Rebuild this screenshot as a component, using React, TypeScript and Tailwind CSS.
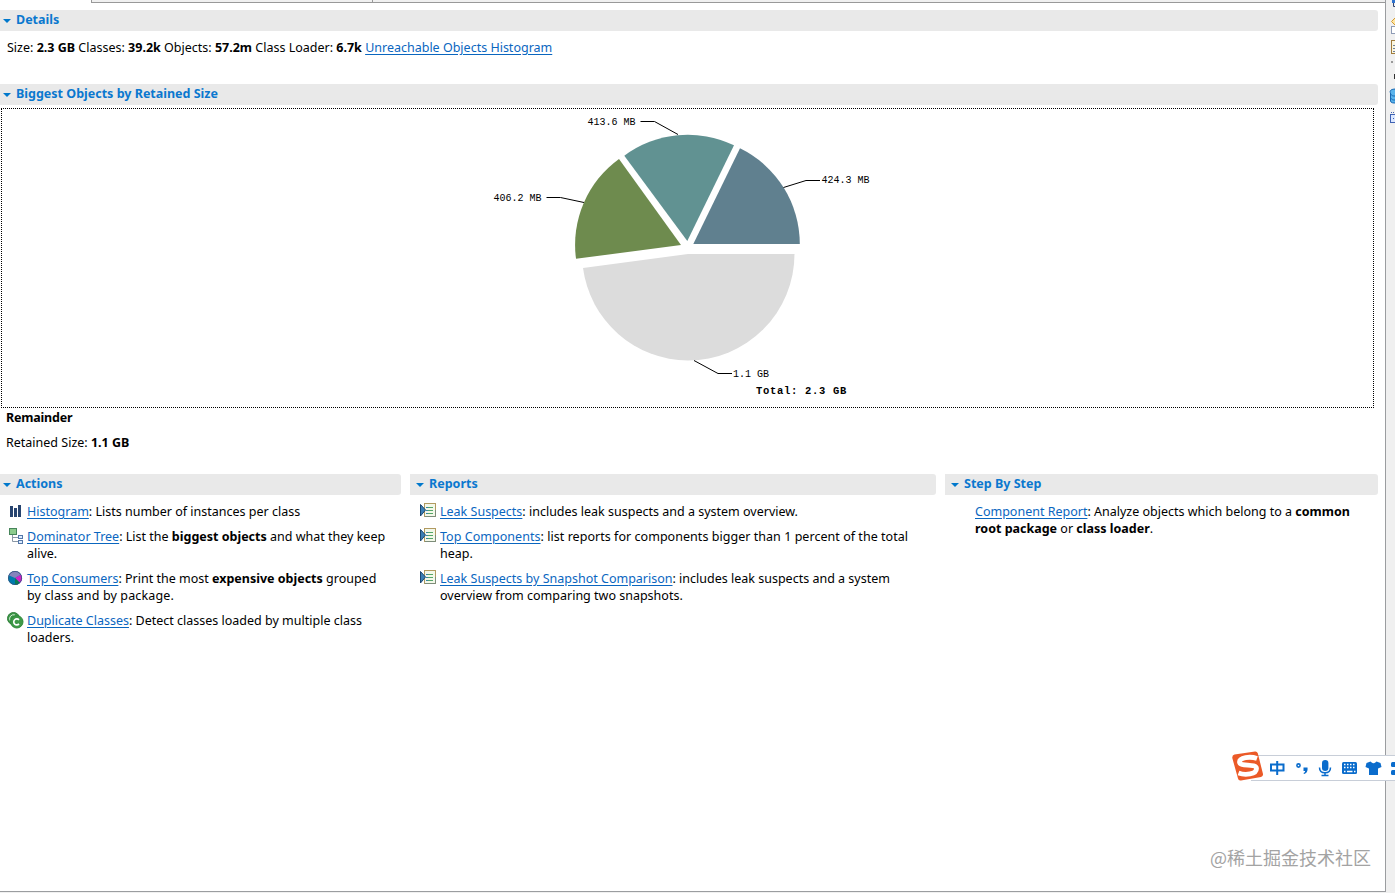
import type { ReactNode } from 'react';

function SectionHeader({ title, inset = false }: { title: string; inset?: boolean }) {
  return (
    <div className={`flex h-[21px] items-center rounded-r-[3px] bg-[#e9e9e9] ${inset ? 'pl-1.5' : 'pl-[3px]'}`}>
      <svg className="mt-px shrink-0" width="8" height="4" viewBox="0 0 8 4">
        <path d="M0 0H8L4 4Z" fill="#0078cc" />
      </svg>
      <h2 className="ml-[5px] -mt-[3px] text-[12.5px] font-bold leading-[17px] text-[#0b78cf]">{title}</h2>
    </div>
  );
}

function Link({ children }: { children: ReactNode }) {
  return (
    <a href="#" className="text-[#0a66bf] underline underline-offset-2">
      {children}
    </a>
  );
}

function Item({ icon, children }: { icon?: ReactNode; children: ReactNode }) {
  return (
    <li className="flex">
      <span className="w-5 shrink-0">{icon}</span>
      <p className="whitespace-nowrap">{children}</p>
    </li>
  );
}

function HistogramIcon() {
  return (
    <svg width="16" height="16" viewBox="0 0 16 16" fill="#27446f">
      <path d="M3 3H6V14H3ZM7 5H10V14H7ZM11 2H14V14H11Z" />
    </svg>
  );
}

function TreeIcon() {
  return (
    <svg width="16" height="16" viewBox="0 0 16 16" fill="none">
      <path d="M5.500 7V13.500H11M5.500 9.500H11" stroke="#8a97a5" />
      <rect x="2.500" y="0.500" width="7" height="6" fill="#8ccb8c" stroke="#47855b" />
      <rect x="11.500" y="7.500" width="4" height="3" fill="#dcebff" stroke="#5477a8" />
      <rect x="11.500" y="12.500" width="4" height="3" fill="#dcebff" stroke="#5477a8" />
    </svg>
  );
}

function ConsumersIcon() {
  return (
    <svg width="16" height="16" viewBox="0 0 16 16">
      <circle cx="8" cy="8" r="7" fill="#0079ad" />
      <path d="M8 8L1.6 5.2A7 7 0 0 1 14 4.5Z" fill="#8583bd" />
      <path d="M8 8L14 4.5A7 7 0 0 1 13 12.9Z" fill="#d222c9" />
      <path d="M8 8L13 12.9A7 7 0 0 1 8 15Z" fill="#087b54" />
      <circle cx="8" cy="8" r="6.6" fill="none" stroke="#36527c" strokeWidth=".8" />
    </svg>
  );
}

function DuplicateIcon() {
  return (
    <svg width="17" height="17" viewBox="0 0 17 17">
      <circle cx="6.5" cy="6.5" r="6" fill="#3e9848" stroke="#2f7d3a" />
      <path d="M3 8.5A4 4 0 0 1 8 3" fill="none" stroke="#d7efd9" />
      <circle cx="9.8" cy="9.8" r="6.2" fill="#3e9848" stroke="#2f8a3a" />
      <path d="M12 7.9A3 3 0 1 0 12 11.9" fill="none" stroke="#fff" strokeWidth="1.6" />
    </svg>
  );
}

function ReportIcon() {
  return (
    <svg className="-mt-px" width="16" height="16" viewBox="0 0 16 16">
      <rect x="4.5" y="1.5" width="11" height="13" fill="#f3f8e9" stroke="#b19a60" />
      <path d="M5 14.5H15.5V8" fill="none" stroke="#7c8c7a" />
      <path d="M6 5.5H8M6 8.5H8M6 11.5H8" stroke="#3b83a6" />
      <path d="M8 5.5H13M8 8.5H13M8 11.5H13" stroke="#55a567" />
      <path d="M.5 2.5L5.5 8L.5 14Z" fill="#3c7fb5" stroke="#1d4771" />
    </svg>
  );
}

function PieChart() {
  return (
    <svg className="ml-[478px]" width="420" height="298" viewBox="480 109 420 298">
      <path d="M693.3 244H799.8A106.5 106.5 0 0 0 740 148.3Z" fill="#60808f" />
      <path d="M687.3 241L734 145.3A106.5 106.5 0 0 0 624.3 155.7Z" fill="#619292" />
      <path d="M681 245L619 159A106 106 0 0 0 576 258.8Z" fill="#6e8b4e" />
      <path d="M688 254H794.5A106.500 106.500 0 0 1 688 360.500A106.500 106.500 0 0 1 583 268Z" fill="#dcdcdc" />
      <g fill="none" stroke="#000">
        <path d="M640.5 121.5H654.5L678 134.5" />
        <path d="M546.5 197.5H560.5L584 202.5" />
        <path d="M783.5 187.5L806 180.5H820" />
        <path d="M694 360.5L718 373.5H732" />
      </g>
      <g className="font-['Liberation_Mono',monospace] text-[10px]" fill="#000">
        <text x="587.5" y="125">413.6 MB</text>
        <text x="493.5" y="201">406.2 MB</text>
        <text x="821.5" y="183">424.3 MB</text>
        <text x="733" y="377">1.1 GB</text>
        <text x="756" y="394" className="text-[10.5px] font-bold tracking-[0.7px]">Total: 2.3 GB</text>
      </g>
    </svg>
  );
}

// view bar on the right, cut off by the window edge
function SideBar() {
  return (
    <div className="flex-1 bg-[#f0f0f0]">
      <svg className="ml-px" width="8" height="130" viewBox="1387 0 8 130">
        <path d="M1392 0H1395V3H1392Z" fill="#2f73cf" />
        <path d="M1393.5 3V6.5H1395" stroke="#35456b" fill="none" />
        <path d="M1395.5 17.5L1391.5 21.5L1395.5 25.5" fill="#ffe6a0" stroke="#d29a35" />
        <rect x="1391.5" y="26.5" width="6" height="7" fill="#fff" stroke="#8e9bb5" />
        <rect x="1391.5" y="40.5" width="6" height="13" fill="#fbf6df" stroke="#a07c3c" />
        <path d="M1393 45.5H1395M1393 48.5H1395M1393 51.5H1395" stroke="#6c7f9c" />
        <rect x="1391" y="61" width="2" height="2" fill="#999" />
        <rect x="1394" y="74" width="1" height="5" fill="#333" />
        <path d="M1396 89C1389 89 1390 92 1390.5 93V101C1391 103 1393 103 1396 103" fill="#59b3ec" stroke="#1767b2" />
        <path d="M1390.5 94C1392 96 1393 96 1395 96M1390.5 98C1392 100 1393 100 1395 100" stroke="#1767b2" fill="none" />
        <rect x="1390.5" y="114.5" width="8" height="8" fill="#dbe7ff" stroke="#3e62b3" />
        <path d="M1391 112.5H1395M1393 118.5H1395" stroke="#3e62b3" strokeDasharray="1 1" />
      </svg>
    </div>
  );
}

function ImeBar() {
  return (
    <div className="absolute left-[1231px] top-[750px] h-8 w-[164px] overflow-hidden">
      <div className="absolute left-5 right-0 top-[5px] h-[26px] border-y border-[#c8ced8] bg-white" />
      <svg className="absolute left-0 top-0" width="164" height="32" viewBox="0 0 164 32" fill="none">
        <path d="M3.5 4.5L24 1.5Q26 1.2 26.8 3.3L32 24Q32.3 26.5 30 27L10 30.5Q7.5 31 7 28.5L1.3 8Q1 5 3.5 4.5Z" fill="#eb5a28" />
        <path d="M26 8.5C19 6 8.500 7.500 8.500 12C8.500 17 25.500 13 25.500 18.500C25.500 24.500 14 25.500 7.500 23" stroke="#fff" strokeWidth="4.8" />
        <g stroke="#0a6ccc" strokeWidth="2">
          <path d="M40 14.500H52.500V20.500H40ZM46.200 11V25" />
          <circle cx="67.5" cy="15.5" r="1.6" strokeWidth="1.6" />
          <path d="M88.5 17.5C88.5 21 91 22.8 94 22.8S99.5 21 99.5 17.5M94 22.5V26M90.5 25.5H97.5" strokeWidth="1.5" />
        </g>
        <g fill="#0a6ccc">
          <path d="M72.5 17.5H76.5C77 21 75.5 23.500 73 24L72.5 23C74 22.3 74.3 21.5 74 21H72.5Z" />
          <rect x="91" y="10" width="6.4" height="11" rx="3.2" />
          <rect x="111" y="12" width="15" height="12" rx="1.5" />
          <path d="M135.5 13L139.500 11.500Q142.500 15 145.500 11.500L149.500 13L150.500 17L147 18.500V25H138V18.500L134.500 17Z" />
          <rect x="160" y="12" width="6" height="5" rx="1.5" />
          <rect x="160" y="20" width="6" height="5" rx="1.5" />
        </g>
        <path d="M113 14.5H124.5M113 17.5H124.5" stroke="#fff" strokeWidth="1.5" strokeDasharray="1.5 1.5" />
        <path d="M113 21.5H124.5" stroke="#fff" strokeWidth="1.5" strokeDasharray="1.5 1.5 5.5 1.5" />
      </svg>
    </div>
  );
}

function App() {
  return (
    <div className="relative flex h-[893px] w-[1395px] overflow-hidden bg-[#f0f0f0] font-['Noto_Sans','Noto_Sans_CJK_SC',sans-serif] text-[12.5px] leading-[17px] text-black">
      <main className="flex h-[892px] w-[1386px] shrink-0 flex-col border-b border-r border-[#9b9da0] bg-white">
        <div className="ml-[91px] flex h-[3px] shrink-0 border-b border-l border-[#999] bg-[#f0f0f0]">
          <div className="w-[281px] border-r border-[#999]" />
        </div>

        <div className="mt-[7px] w-[1378px]">
          <SectionHeader title="Details" />
          <p className="mt-2 ml-[7px] h-[45px] whitespace-nowrap">
            Size: <b>2.3 GB</b> Classes: <b>39.2k</b> Objects: <b>57.2m</b> Class Loader: <b>6.7k</b>{' '}
            <Link>Unreachable Objects Histogram</Link>
          </p>
          <SectionHeader title="Biggest Objects by Retained Size" />
        </div>

        <div className="ml-px mt-[3px] h-[300px] w-[1373px] shrink-0 border border-dotted border-black">
          <PieChart />
        </div>
        <p className="ml-1.5 mt-px font-bold tracking-[-0.2px]">Remainder</p>
        <p className="ml-1.5 mt-2">
          Retained Size: <b>1.1 GB</b>
        </p>

        <div className="mt-[23px] flex">
          <section className="w-[401px]">
            <SectionHeader title="Actions" />
            <ul className="ml-[7px] mt-2 flex flex-col gap-2">
              <Item icon={<HistogramIcon />}>
                <Link>Histogram</Link>: Lists number of instances per class
              </Item>
              <Item icon={<TreeIcon />}>
                <Link>Dominator Tree</Link>: List the <b>biggest objects</b> and what they keep
                <br />
                alive.
              </Item>
              <Item icon={<ConsumersIcon />}>
                <Link>Top Consumers</Link>: Print the most <b>expensive objects</b> grouped
                <br />
                <span className="tracking-[0.13px]">by class and by package.</span>
              </Item>
              <Item icon={<DuplicateIcon />}>
                <Link>Duplicate Classes</Link>: Detect classes loaded by multiple class
                <br />
                loaders.
              </Item>
            </ul>
          </section>

          <section className="ml-[9px] w-[526px]">
            <SectionHeader title="Reports" inset />
            <ul className="ml-2.5 mt-2 flex flex-col gap-2">
              <Item icon={<ReportIcon />}>
                <Link>Leak Suspects</Link>: includes leak suspects and a system overview.
              </Item>
              <Item icon={<ReportIcon />}>
                <span className="tracking-[0.04px]">
                  <Link>Top Components</Link>: list reports for components bigger than 1 percent of the total
                </span>
                <br />
                heap.
              </Item>
              <Item icon={<ReportIcon />}>
                <Link>Leak Suspects by Snapshot Comparison</Link>: includes leak suspects and a system
                <br />
                overview from comparing two snapshots.
              </Item>
            </ul>
          </section>

          <section className="ml-[9px] w-[433px]">
            <SectionHeader title="Step By Step" inset />
            <ul className="ml-2.5 mt-2">
              <Item>
                <Link>Component Report</Link>: Analyze objects which belong to a <b>common</b>
                <br />
                <b>root package</b> or <b>class loader</b>.
              </Item>
            </ul>
          </section>
        </div>
      </main>

      <SideBar />
      <ImeBar />
      <div className="absolute left-[1210px] top-[845px] whitespace-nowrap font-['Noto_Sans_CJK_SC',sans-serif] text-[18px] leading-6 text-[#a3a3a3]">
        @稀土掘金技术社区
      </div>
    </div>
  );
}

export default App;
